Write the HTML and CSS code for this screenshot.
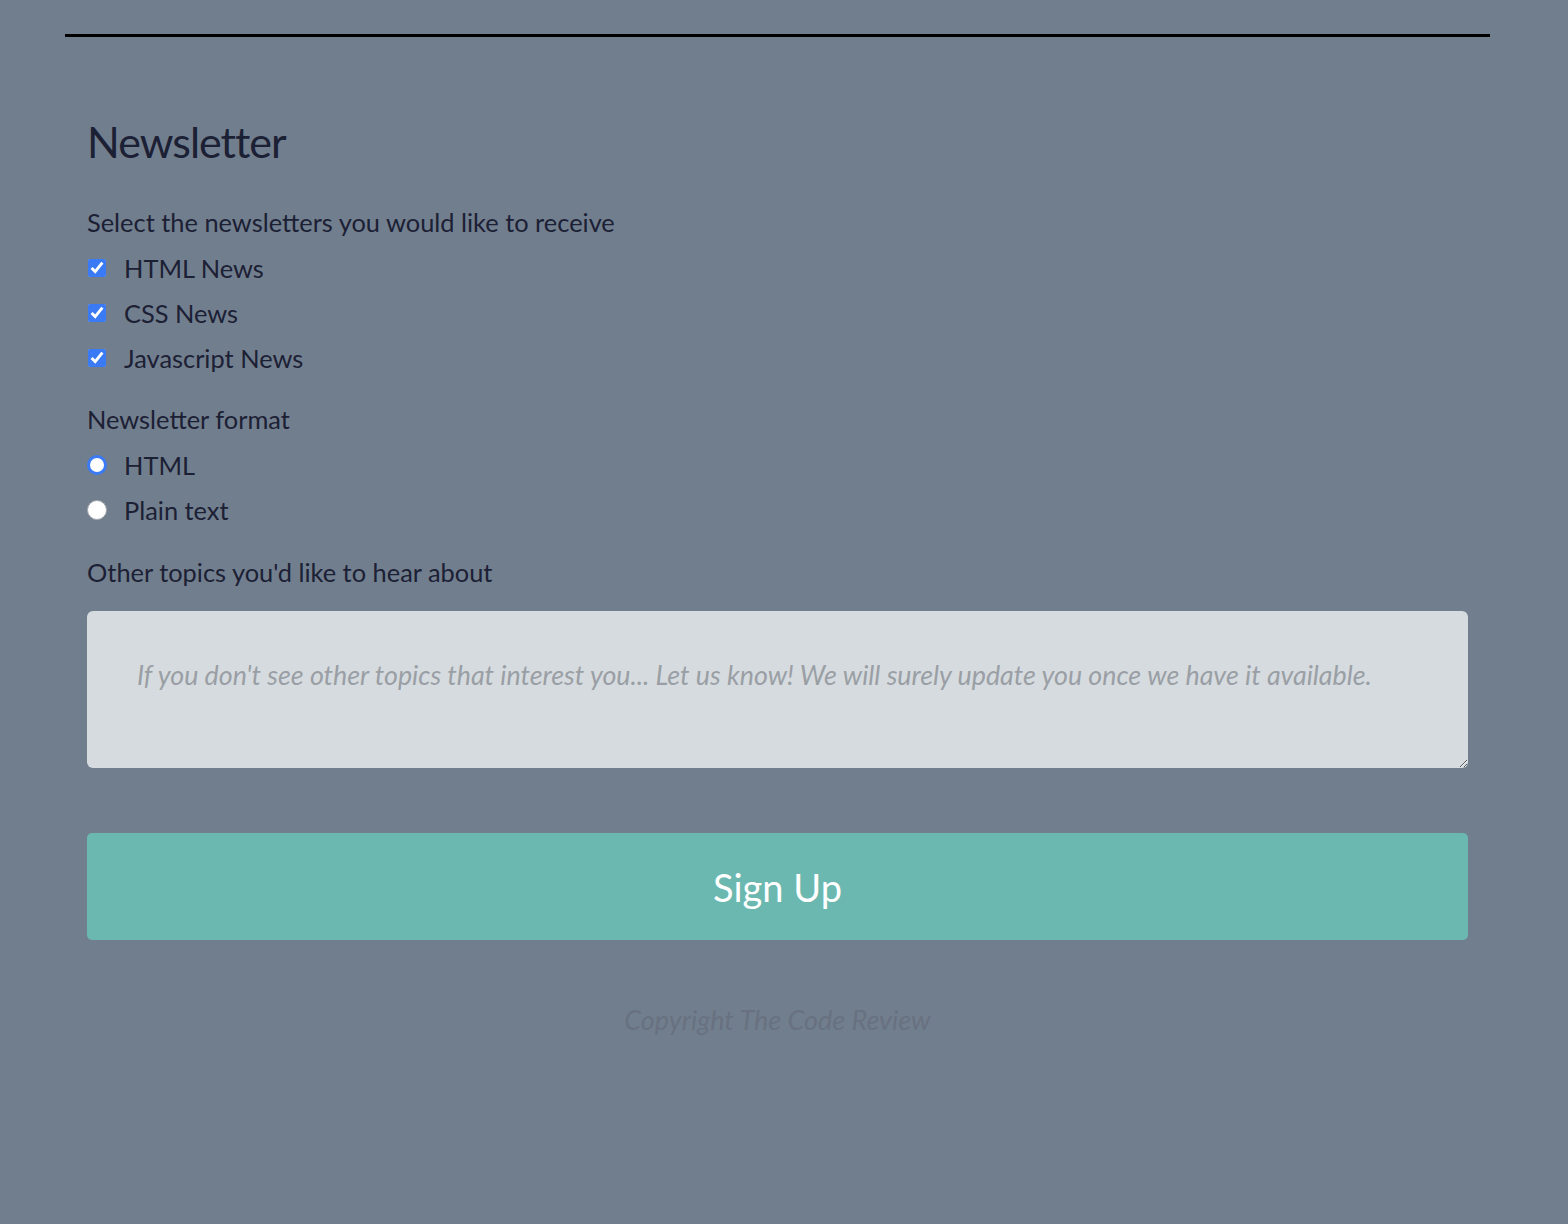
FILE: index.html
```html
<!DOCTYPE html>
<html lang="en">
<head>
    <meta charset="UTF-8">
    <meta name="viewport" content="width=device-width, initial-scale=1.0">
    <title>Newsletter</title>
    <link rel="stylesheet" href="styles.css">
</head>
<body>
    <form class="signup">
        <h2>Newsletter</h2>
        <div class="group">
            <p class="label">Select the newsletters you would like to receive</p>
            <label class="option"><input type="checkbox" checked> HTML News</label>
            <label class="option"><input type="checkbox" checked> CSS News</label>
            <label class="option"><input type="checkbox" checked> Javascript News</label>
        </div>
        <div class="group">
            <p class="label">Newsletter format</p>
            <label class="option"><input type="radio" name="format" class="radio" checked> HTML</label>
            <label class="option"><input type="radio" name="format" class="radio"> Plain text</label>
        </div>
        <div class="group">
            <p class="label">Other topics you'd like to hear about</p>
            <textarea placeholder="If you don't see other topics that interest you... Let us know! We will surely update you once we have it available."></textarea>
        </div>
        <button type="button" class="submit">Sign Up</button>
    </form>
    <footer>
        <p>Copyright The Code Review</p>
    </footer>
</body>
</html>
```

FILE: styles.css
```css
body {
    margin: 0;
    font-family: Lato, 'Open Sans', sans-serif;
    color: #1c2034;
    background-color: #717e8e;
}
.signup {
    width: 1381px;
    margin: 34px 0 0 65px;
    padding: 0 22px;
    border-top: 3px solid #000000;
}
.signup h2 {
    margin: 79px 0 0;
    font-size: 43px;
    font-weight: 400;
    line-height: 1.2;
    letter-spacing: -1px;
}
.group {
    margin-top: 24px;
}
.group:first-of-type {
    margin-top: 39px;
}
.label {
    margin: 0 0 8px;
    font-size: 25.4px;
    line-height: 1.2;
}
.option {
    display: flex;
    align-items: center;
    height: 45px;
    font-size: 25.4px;
}
.option input {
    width: 18px;
    height: 18px;
    margin: 0 18px 0 1px;
    accent-color: #3a7bf5;
}
.radio {
    appearance: none;
    -webkit-appearance: none;
    box-sizing: border-box;
    width: 20px !important;
    height: 20px !important;
    margin: -1px 17px 0 0 !important;
    border-radius: 50%;
    background: #ffffff;
    border: 1px solid #a3a8ae;
}
.radio:checked {
    border: 3.5px solid #3a7bf5;
}
textarea {
    display: block;
    box-sizing: border-box;
    width: 100%;
    height: 157px;
    margin-top: 24px;
    padding: 48px 50px 40px;
    border: none;
    border-radius: 6px;
    background: #d6dbdf;
    font-family: inherit;
    font-size: 26.8px;
    line-height: 1.2;
    color: #1c2034;
}
textarea::placeholder {
    color: #9a9fa5;
    font-style: italic;
}
.submit {
    display: block;
    width: 100%;
    height: 107px;
    margin-top: 65px;
    border: none;
    border-radius: 5px;
    background: #6bb8b0;
    color: #ffffff;
    font-family: inherit;
    font-size: 38px;
}
footer {
    text-align: center;
    width: 1555px;
}
footer p {
    margin: 63px 0 0;
    font-size: 27px;
    font-style: italic;
    color: #687180;
}
```
